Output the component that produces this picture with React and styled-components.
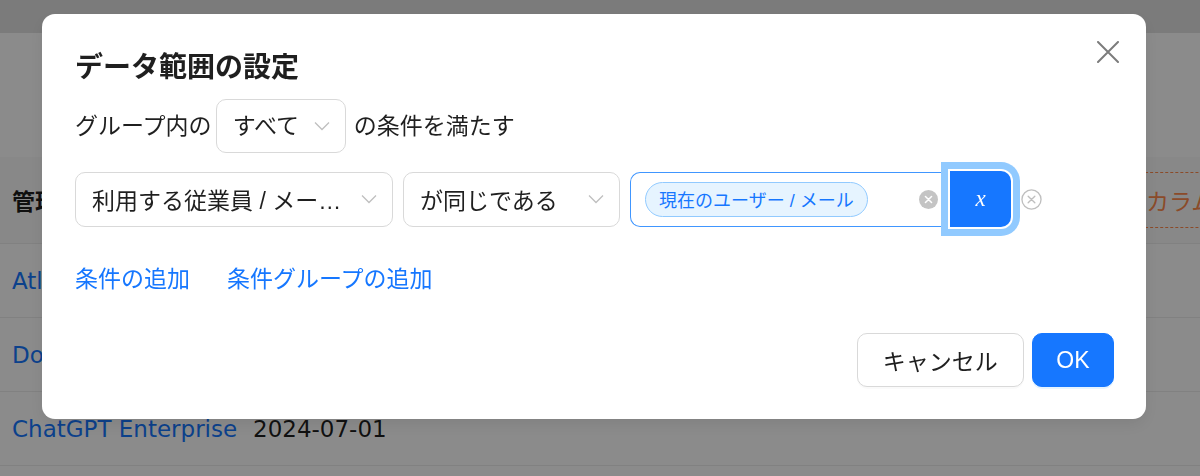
import React from "react";
import styled, { createGlobalStyle } from "styled-components";

// global page reset
const GlobalStyle = createGlobalStyle`
    html, body {
        margin: 0;
        padding: 0;
        overflow: hidden;
        background: #fff;
    }
    body {
        font-family: "Liberation Sans", "Noto Sans CJK JP", sans-serif;
        color: rgba(0, 0, 0, 0.88);
    }
`;

/* ---------- page behind the modal ---------- */
const Page = styled.div`
    width: 100%;
    height: 476px;
    overflow: hidden;
    display: flex;
    flex-direction: column;
`;

const TopBar = styled.div`
    height: 33px;
    background: #e2e2e2;
    flex-shrink: 0;
`;

const Table = styled.div`
    margin-top: 124px;
    display: flex;
    flex-direction: column;
`;

const TableRow = styled.div`
    display: grid;
    grid-template-columns: 241px 220px 220px 220px 217px 300px;
    align-items: center;
    padding-left: 12px;
    height: ${(props) => (props.head ? "86px" : "73px")};
    background: ${(props) => (props.head ? "#fafafa" : "#fff")};
    border-bottom: 1px solid #ececec;
    font-family: "DejaVu Sans", "Noto Sans CJK JP", sans-serif;
    font-size: 23px;
    font-weight: ${(props) => (props.head ? 700 : 400)};
    white-space: nowrap;
`;

const NameCell = styled.span`
    color: #1677ff;
`;

const DashedButton = styled.div`
    height: 54px;
    display: flex;
    align-items: center;
    padding: 0 16px;
    border-top: 1px dashed #ff8a4c;
    border-bottom: 1px dashed #ff8a4c;
    color: #ff8a4c;
    font-family: "Noto Sans CJK JP", sans-serif;
    font-weight: 400;
`;

const Mask = styled.div`
    position: fixed;
    inset: 0;
    background: rgba(0, 0, 0, 0.455);
`;

/* ---------- modal ---------- */
const ModalWrap = styled.div`
    position: fixed;
    inset: 0;
    display: flex;
    align-items: flex-start;
    padding: 14px 0 0 42px;
`;

const Modal = styled.div`
    position: relative;
    width: 1104px;
    box-sizing: border-box;
    padding: 34px 32px 32px 33px;
    background: #fff;
    border-radius: 13px;
    box-shadow: 0 6px 16px rgba(0, 0, 0, 0.08);
    font-family: "Liberation Sans", "Noto Sans CJK JP", sans-serif;
    font-size: 23px;
    color: rgba(0, 0, 0, 0.88);
`;

const CloseButton = styled.div`
    position: absolute;
    top: 27px;
    right: 27px;
    width: 22px;
    height: 22px;
    display: flex;
    color: #7c7c7c;
`;

const Title = styled.div`
    font-size: 28px;
    font-weight: 700;
    line-height: 40px;
    color: #1f1f1f;
`;

const MatchRow = styled.div`
    margin-top: 11px;
    display: flex;
    align-items: center;
    gap: 4px;
    line-height: 32px;
`;

const ConditionRow = styled.div`
    margin-top: 18px;
    display: flex;
    align-items: center;
    gap: 10px;
`;

const SelectBox = styled.div`
    width: ${(props) => props.width}px;
    height: ${(props) => props.height || 55}px;
    box-sizing: border-box;
    flex-shrink: 0;
    display: flex;
    align-items: center;
    gap: 14px;
    padding: 0 15px 0 16px;
    border: 1px solid #d9d9d9;
    border-radius: 10px;
    background: #fff;
`;

const SelectText = styled.span`
    flex: 1;
    min-width: 0;
    white-space: nowrap;
    overflow: hidden;
    text-overflow: ellipsis;
`;

const Chevron = styled.svg`
    width: 16px;
    height: 10px;
    flex-shrink: 0;
    color: #bfbfbf;
`;

const ValueGroup = styled.div`
    display: flex;
    align-items: center;
`;

const ValueInput = styled.div`
    width: 320px;
    height: 55px;
    box-sizing: border-box;
    display: flex;
    align-items: center;
    justify-content: space-between;
    padding: 0 12px 0 14px;
    border: 1.5px solid #4096ff;
    border-right: none;
    border-radius: 10px 0 0 10px;
`;

const Tag = styled.span`
    height: 35px;
    box-sizing: border-box;
    display: inline-flex;
    align-items: center;
    padding: 0 13px;
    border: 1.5px solid #91caff;
    border-radius: 18px;
    background: #e6f4ff;
    color: #1677ff;
    font-size: 18px;
    white-space: nowrap;
`;

const ClearIcon = styled.svg`
    width: 19px;
    height: 19px;
    flex-shrink: 0;
`;

const VarButton = styled.div`
    position: relative;
    width: 61px;
    height: 56px;
    display: flex;
    align-items: center;
    justify-content: center;
    background: #1677ff;
    border-radius: 0 10px 10px 0;
    box-shadow: 0 0 0 2px #fff, 0 0 0 9px #91caff;
    color: #fff;
    font-family: "Liberation Serif", "DejaVu Serif", serif;
    font-style: italic;
    font-size: 23px;
`;

const RemoveIcon = styled.svg`
    width: 21px;
    height: 21px;
    flex-shrink: 0;
`;

const Links = styled.div`
    margin-top: 36px;
    display: flex;
    gap: 37px;
    line-height: 32px;
`;

const LinkText = styled.span`
    color: #1677ff;
    cursor: pointer;
`;

const Footer = styled.div`
    margin-top: 38px;
    display: flex;
    justify-content: flex-end;
    gap: 8px;
`;

const Button = styled.button`
    height: 54px;
    box-sizing: border-box;
    padding: ${(props) => (props.primary ? "0 23.5px" : "0 25px")};
    border: 1.5px solid ${(props) => (props.primary ? "#1677ff" : "#d9d9d9")};
    border-radius: 10px;
    background: ${(props) => (props.primary ? "#1677ff" : "#fff")};
    color: ${(props) => (props.primary ? "#fff" : "rgba(0, 0, 0, 0.88)")};
    font-family: "Liberation Sans", "Noto Sans CJK JP", sans-serif;
    font-size: 23px;
    box-shadow: ${(props) =>
        props.primary
            ? "0 2px 0 rgba(5, 145, 255, 0.1)"
            : "0 2px 0 rgba(0, 0, 0, 0.02)"};
`;

const Select = ({ width, height, children }) => (
    <SelectBox width={width} height={height}>
        <SelectText>{children}</SelectText>
        <Chevron viewBox="0 0 16 10">
            <polyline
                points="1,1.5 8,8.5 15,1.5"
                fill="none"
                stroke="currentColor"
                strokeWidth="1.3"
            />
        </Chevron>
    </SelectBox>
);

const rows = [
    { name: "Atlassian", date: "2024-05-01" },
    { name: "DocuSign", date: "2024-06-01" },
    { name: "ChatGPT Enterprise", date: "2024-07-01" },
];

const App = () => {
    return (
        <>
            <GlobalStyle />
            <Page>
                <TopBar />
                <Table>
                    <TableRow head>
                        <span>管理対象アプリ</span>
                        <span>開始日</span>
                        <span>終了日</span>
                        <span>担当者</span>
                        <span>部署</span>
                        <DashedButton>カラムを追加</DashedButton>
                    </TableRow>
                    {rows.map((r) => (
                        <TableRow key={r.name}>
                            <NameCell>{r.name}</NameCell>
                            <span>{r.date}</span>
                        </TableRow>
                    ))}
                </Table>
            </Page>
            <Mask />
            <ModalWrap>
                <Modal>
                    <CloseButton>
                        <svg viewBox="0 0 22 22" width="22" height="22">
                            <path
                                d="M1 1 L21 21 M21 1 L1 21"
                                stroke="currentColor"
                                strokeWidth="2"
                                strokeLinecap="round"
                            />
                        </svg>
                    </CloseButton>
                    <Title>データ範囲の設定</Title>
                    <MatchRow>
                        <span>グループ内の</span>
                        <Select width={130} height={54}>
                            すべて
                        </Select>
                        <span style={{ marginLeft: 4 }}>の条件を満たす</span>
                    </MatchRow>
                    <ConditionRow>
                        <Select width={318}>利用する従業員 / メールアドレス</Select>
                        <Select width={217}>が同じである</Select>
                        <ValueGroup>
                            <ValueInput>
                                <Tag>現在のユーザー / メール</Tag>
                                <ClearIcon viewBox="0 0 20 20">
                                    <circle cx="10" cy="10" r="10" fill="#c4c4c4" />
                                    <path
                                        d="M6.8 6.8 L13.2 13.2 M13.2 6.8 L6.8 13.2"
                                        stroke="#fff"
                                        strokeWidth="1.6"
                                        strokeLinecap="round"
                                    />
                                </ClearIcon>
                            </ValueInput>
                            <VarButton>x</VarButton>
                        </ValueGroup>
                        <RemoveIcon viewBox="0 0 22 22">
                            <circle
                                cx="11"
                                cy="11"
                                r="10"
                                fill="none"
                                stroke="#bfbfbf"
                                strokeWidth="1.4"
                            />
                            <path
                                d="M7.5 7.5 L14.5 14.5 M14.5 7.5 L7.5 14.5"
                                stroke="#bfbfbf"
                                strokeWidth="1.4"
                                strokeLinecap="round"
                            />
                        </RemoveIcon>
                    </ConditionRow>
                    <Links>
                        <LinkText>条件の追加</LinkText>
                        <LinkText>条件グループの追加</LinkText>
                    </Links>
                    <Footer>
                        <Button>キャンセル</Button>
                        <Button primary>OK</Button>
                    </Footer>
                </Modal>
            </ModalWrap>
        </>
    );
};

export default App;
